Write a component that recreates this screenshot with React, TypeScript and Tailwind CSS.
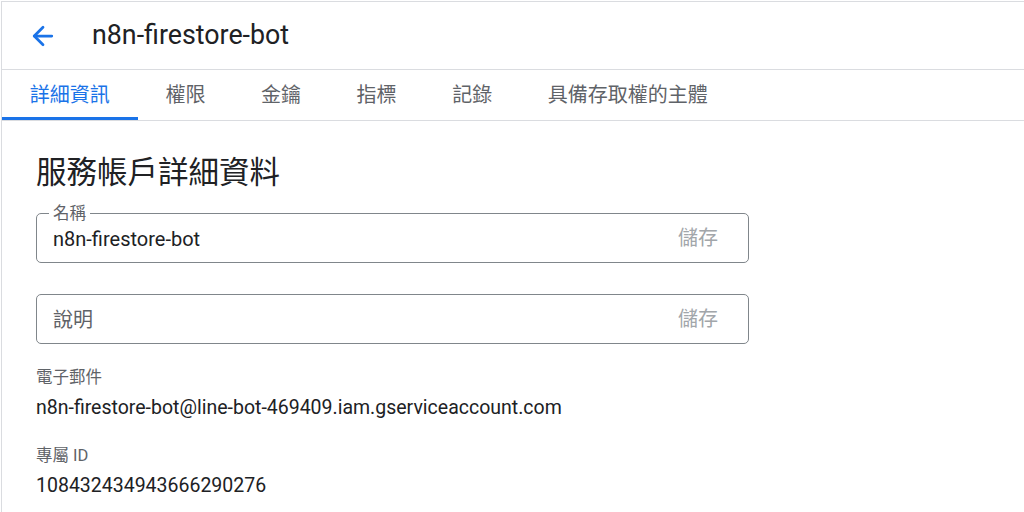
import { ArrowLeft } from "lucide-react";

const tabs = ["詳細資訊", "權限", "金鑰", "指標", "記錄", "具備存取權的主體"];

function Field({ label, value, placeholder }: { label?: string; value?: string; placeholder?: string }) {
  return (
    <div className="relative flex h-[50px] w-[713px] items-center rounded-[5px] border border-[#80868b] pl-[16px] pr-[30px]">
      {label && (
        <span className="absolute -top-[10px] left-[12px] bg-white px-[4px] text-[16.5px] leading-[20px] text-[#5f6368]">
          {label}
        </span>
      )}
      <div className="flex-1 pt-[2px]">
        {value ? (
          <span className="text-[20px] text-[#202124]">{value}</span>
        ) : (
          <span className="text-[20px] text-[#5f6368]">{placeholder}</span>
        )}
      </div>
      <span className="text-[20px] text-[#a2a6aa]">儲存</span>
    </div>
  );
}

export default function App() {
  return (
    <div
      className="h-[512px] w-[1024px] overflow-hidden bg-white pl-px pt-px"
      style={{ fontFamily: 'Roboto, "Noto Sans CJK TC", sans-serif' }}
    >
      <div className="h-full border-l border-t border-[#dadce0]">
        <div className="flex h-[68px] items-center border-b border-[#dadce0] pl-[26px]">
          <ArrowLeft className="h-[30px] w-[30px] text-[#1a73e8]" strokeWidth={2.2} />
          <h1 className="ml-[34px] text-[26.8px] text-[#202124]">n8n-firestore-bot</h1>
        </div>
        <div className="flex h-[51px] border-b border-[#dadce0]">
          {tabs.map((t, i) => (
            <div
              key={t}
              className={
                i === 0
                  ? "flex items-center border-b-[3px] border-[#1a73e8] px-[27.8px] pt-[3px] text-[20px] text-[#1a73e8]"
                  : "flex items-center border-b-[3px] border-transparent px-[27.8px] pt-[3px] text-[20px] text-[#5f6368]"
              }
            >
              {t}
            </div>
          ))}
        </div>
        <div className="pl-[34px] pt-[32px]">
          <h2 className="text-[30.5px] leading-[40px] text-[#202124]">服務帳戶詳細資料</h2>
          <div className="mt-[20px] flex flex-col gap-[31px]">
            <Field label="名稱" value="n8n-firestore-bot" />
            <Field placeholder="說明" />
          </div>
          <div className="mt-[22px] text-[16.5px] leading-[24px] text-[#5f6368]">電子郵件</div>
          <div className="mt-[6px] text-[19.5px] leading-[24px] text-[#202124]">
            n8n-firestore-bot@line-bot-469409.iam.gserviceaccount.com
          </div>
          <div className="mt-[24px] text-[16.5px] leading-[24px] text-[#5f6368]">專屬 ID</div>
          <div className="mt-[6px] text-[19.5px] leading-[24px] text-[#202124]">108432434943666290276</div>
        </div>
      </div>
    </div>
  );
}
